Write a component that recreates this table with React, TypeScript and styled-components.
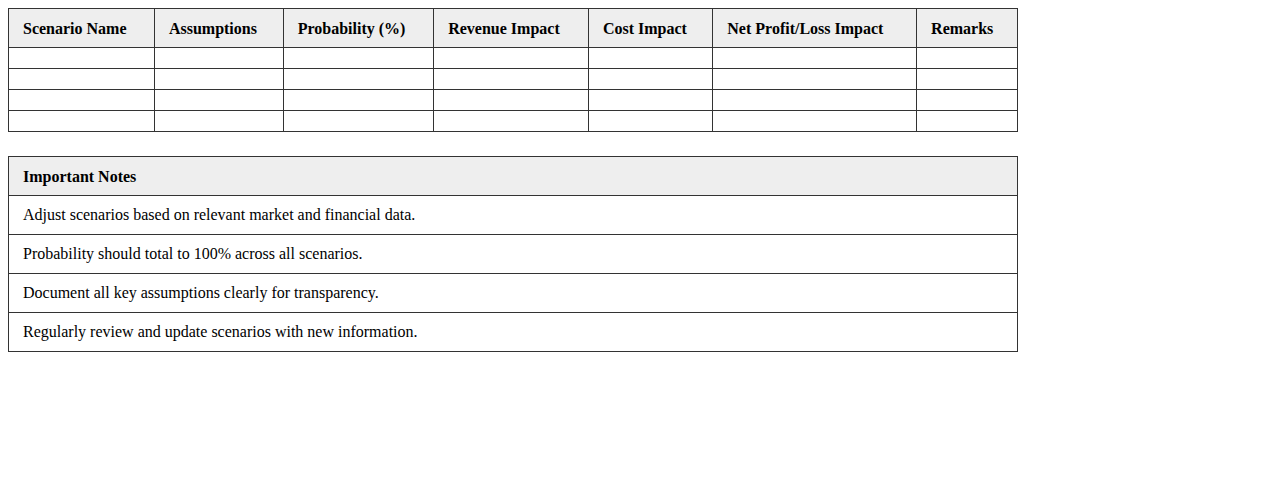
import styled, { createGlobalStyle } from "styled-components";

const GlobalStyle = createGlobalStyle`
    body {
        margin: 8px;
        background: #ffffff;
        font-family: "Liberation Serif", "Times New Roman", serif;
        color: #000000;
    }
`;

const columns = [
    "Scenario Name",
    "Assumptions",
    "Probability (%)",
    "Revenue Impact",
    "Cost Impact",
    "Net Profit/Loss Impact",
    "Remarks",
];

const notes = [
    "Adjust scenarios based on relevant market and financial data.",
    "Probability should total to 100% across all scenarios.",
    "Document all key assumptions clearly for transparency.",
    "Regularly review and update scenarios with new information.",
];

export default function App() {
    return (
        <>
            <GlobalStyle />
            <Sheet>
                <thead>
                    <tr>
                        {columns.map((c) => (
                            <HeadCell key={c}>{c}</HeadCell>
                        ))}
                    </tr>
                </thead>
                <tbody>
                    {[0, 1, 2, 3].map((r) => (
                        <tr key={r}>
                            {columns.map((c) => (
                                <Cell key={c}></Cell>
                            ))}
                        </tr>
                    ))}
                </tbody>
            </Sheet>
            <Sheet>
                <thead>
                    <tr>
                        <HeadCell>Important Notes</HeadCell>
                    </tr>
                </thead>
                <tbody>
                    {notes.map((n) => (
                        <tr key={n}>
                            <Cell>{n}</Cell>
                        </tr>
                    ))}
                </tbody>
            </Sheet>
        </>
    );
}

const Sheet = styled.table`
    width: 80%;
    border-collapse: collapse;
    margin-bottom: 24px;
    font-size: 16px;
`;

const HeadCell = styled.th`
    border: 1px solid #333333;
    background-color: #eeeeee;
    padding: 11px 14px 9px;
    text-align: left;
    font-weight: bold;
`;

const Cell = styled.td`
    border: 1px solid #333333;
    padding: 10px 14px;
    text-align: left;
`;
